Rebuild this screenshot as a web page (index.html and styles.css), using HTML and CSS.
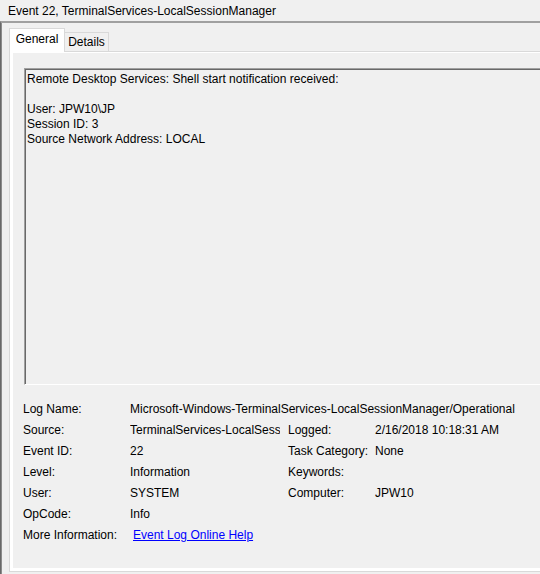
FILE: index.html
```html
<!DOCTYPE html>
<html lang="en">
  <head>
    <meta charset="UTF-8" />
    <meta name="viewport" content="width=device-width, initial-scale=1.0" />
    <title>Event Properties</title>
    <link rel="stylesheet" href="styles.css">
  </head>
  <body>
    <div class="title">Event 22, TerminalServices-LocalSessionManager</div>
    <div class="window">
      <div class="tabs">
        <div class="tab tab-active">General</div>
        <div class="tab">Details</div>
      </div>
      <div class="tab-body">
        <div class="tab-page">
          <div class="description">Remote Desktop Services: Shell start notification received:<br><br>User: JPW10\JP<br>Session ID: 3<br>Source Network Address: LOCAL</div>

          <div class="props">
            <div class="key">Log Name:</div>
            <div class="value-wide">Microsoft-Windows-TerminalServices-LocalSessionManager/Operational</div>

            <div class="key">Source:</div>
            <div class="value-clip">TerminalServices-LocalSessionManager</div>
            <div>Logged:</div>
            <div>2/16/2018 10:18:31 AM</div>

            <div class="key">Event ID:</div>
            <div class="value-clip">22</div>
            <div>Task Category:</div>
            <div>None</div>

            <div class="key">Level:</div>
            <div class="value-clip">Information</div>
            <div>Keywords:</div>
            <div></div>

            <div class="key">User:</div>
            <div class="value-clip">SYSTEM</div>
            <div>Computer:</div>
            <div>JPW10</div>

            <div class="key">OpCode:</div>
            <div class="value-clip">Info</div>

            <div class="key">More Information:</div>
            <div class="value-wide"><a href="#" class="help-link">Event Log Online Help</a></div>
          </div>
        </div>
      </div>
    </div>
  </body>
</html>
```

FILE: styles.css
```css
/* Reset */
* {
  box-sizing: border-box;
}

html,
body {
  overflow: hidden;
}

body {
  margin: 0;
  width: 540px;
  height: 574px;
  background-color: #f0f0f0;
  color: #000;
  font-family: "Liberation Sans", Arial, sans-serif;
  font-size: 12px;
}

/* Title */
.title {
  height: 21px;
  padding: 4px 0 0 8px;
  line-height: 15px;
  white-space: nowrap;
}

/* Window frame */
.window {
  height: 553px;
  padding: 5px 0 0 8px;
  border-top: 2px solid #a0a0a0;
  border-left: 1px solid #696969;
  box-shadow: inset 1px 0 #8c8c8c;
}

/* Tabs */
.tabs {
  display: flex;
  align-items: flex-end;
  height: 23px;
}

.tab {
  width: 44px;
  height: 19px;
  padding-top: 2px;
  border: 1px solid #d9d9d9;
  border-left: none;
  border-bottom: none;
  background-color: #f0f0f0;
  line-height: 15px;
  text-align: center;
}

.tab-active {
  position: relative;
  width: 56px;
  height: 24px;
  margin-bottom: -1px;
  padding-top: 3px;
  border-left: 1px solid #d9d9d9;
  background-color: #fff;
}

.tab-body {
  padding: 1px 0 3px 3px;
  border: 1px solid #d9d9d9;
  border-right: none;
  background-color: #fff;
}

.tab-page {
  height: 515px;
  padding: 15px 0 0 11px;
  background-color: #f0f0f0;
}

/* Read-only text box */
.description {
  height: 317px;
  padding: 3px 0 0 2px;
  border-top: 1px solid #a0a0a0;
  border-left: 1px solid #a0a0a0;
  border-bottom: 1px solid #fff;
  box-shadow: inset 1px 1px #696969;
  line-height: 15px;
  white-space: nowrap;
}

/* Properties grid */
.props {
  display: grid;
  grid-template-columns: 107px 158px 87px 1fr;
  grid-auto-rows: 21px;
  margin: 14px 0 0 -1px;
  line-height: 21px;
  white-space: nowrap;
}

.props .key {
  grid-column: 1;
}

.props .value-wide {
  grid-column: 2 / -1;
}

.props .value-clip {
  margin-right: 8px;
  overflow: hidden;
}

.help-link {
  padding-left: 3px;
  color: #0000ff;
}
```
